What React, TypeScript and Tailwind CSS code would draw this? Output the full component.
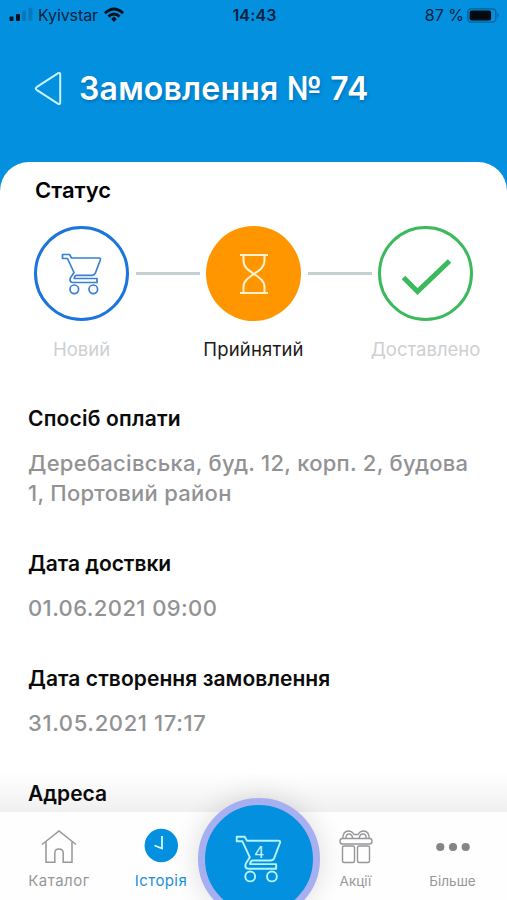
import type { ReactNode } from "react";

const details = [
  {
    title: "Спосіб оплати",
    value: "Деребасівська, буд. 12, корп. 2, будова 1, Портовий район",
    titleClass: "tracking-[0.2px]",
    valueClass: "tracking-[0.27px]",
  },
  { title: "Дата доствки", value: "01.06.2021 09:00", titleClass: "tracking-[-0.05px]", valueClass: "tracking-[0.4px]" },
  { title: "Дата створення замовлення", value: "31.05.2021 17:17", titleClass: "tracking-[0.07px]", valueClass: "tracking-[0.62px]" },
];

export default function App() {
  return (
    <div className="relative flex h-[900px] w-[507px] flex-col overflow-hidden bg-[#0290df] font-['Inter','Liberation_Sans',sans-serif]">
      <StatusBar />

      {/* Header */}
      <header className="flex h-[132px] shrink-0 items-start pl-[34px] pt-[40px]">
        <svg className="mt-px h-[35px] w-7 shrink-0" viewBox="0 0 28 35" fill="none" stroke="#c9f3ff" strokeWidth="2" strokeLinejoin="round">
          <path d="M24.2 2.2 2.6 16.2Q.8 17.5 2.6 18.8L24.2 32.8Q26.2 33.8 26.2 31.6V3.4Q26.2 1.2 24.2 2.2Z" />
        </svg>
        <h1 className="ml-[17px] mt-px whitespace-nowrap text-[32px] font-semibold leading-[36px] tracking-[0.2px] text-white [text-shadow:1px_2px_3px_rgba(0,60,120,0.35)]">
          Замовлення № 74
        </h1>
      </header>

      {/* Order */}
      <main className="flex-1 rounded-t-[29px] bg-white">
        <h2 className="pl-[35px] pt-[14px] text-[22px] font-semibold leading-[28px] text-black">Статус</h2>

        <div className="mt-[22px] flex items-start pl-[34px]">
          <Step label="Новий" className="border-[3px] border-[#1c75dc]" labelClass="text-[#cdd0d2]">
            <CartIcon className="h-[42px] w-[42px] text-[#397fd2]" />
          </Step>
          <Connector />
          <Step label="Прийнятий" className="bg-[#ff9600]" labelClass="text-[#1a1a1a] tracking-[0.15px]">
            <HourglassIcon />
          </Step>
          <Connector />
          <Step label="Доставлено" className="border-[3px] border-[#3cb95b]" labelClass="text-[#cdd0d2]">
            <svg className="h-[94px] w-[94px] shrink-0" viewBox="0 0 94 94" fill="none" stroke="#3cb95b" strokeWidth="5">
              <path d="M24.5 50.5 38.5 64.5 70.5 34" />
            </svg>
          </Step>
        </div>

        <div className="mt-[41px] flex flex-col gap-[41px] pl-7">
          {details.map((d) => (
            <section key={d.title}>
              <h3 className={`text-[21px] font-semibold leading-[30px] text-[#0b0b0b] ${d.titleClass}`}>{d.title}</h3>
              <p className={`mt-[14px] w-[450px] text-[22px] font-medium leading-[30px] text-[#929294] ${d.valueClass}`}>{d.value}</p>
            </section>
          ))}
          <h3 className="text-[21px] font-semibold leading-[30px] text-[#0b0b0b]">Адреса</h3>
        </div>
      </main>

      <TabBar />
    </div>
  );
}

function StatusBar() {
  return (
    <div className="flex h-[30px] shrink-0 items-center justify-between pl-[9px] pr-[7px] text-[#06223d]">
      <div className="flex w-[180px] items-center">
        <svg className="h-4 w-6" viewBox="0 0 24 16">
          <rect x="0.5" y="9.5" width="4" height="4.5" rx="1" fill="#04101c" />
          <rect x="7" y="7" width="4" height="7" rx="1" fill="#04101c" />
          <rect x="13" y="3.5" width="4" height="10.5" rx="1" fill="#0779ba" />
          <rect x="19.5" y="0.8" width="4" height="13.2" rx="1" fill="#0779ba" />
        </svg>
        <span className="ml-[5px] text-[16px] leading-[30px] tracking-[-0.1px]">Kyivstar</span>
        <svg className="ml-[6px] h-4 w-5" viewBox="0 0 20 16" fill="none" stroke="#04101c" strokeWidth="2.8">
          <path d="M1 6.2Q10-2.2 19 6.2" />
          <path d="M4.4 9.6Q10 4.4 15.6 9.6" />
          <path d="M7.2 12 10 9.6 12.8 12 10 15Z" fill="#04101c" stroke="none" />
        </svg>
      </div>
      <span className="text-[16px] font-semibold tracking-[0.15px]">14:43</span>
      <div className="flex w-[180px] items-center justify-end">
        <span className="text-[16px]">87 %</span>
        <svg className="ml-[3px] h-[15px] w-[33px]" viewBox="0 0 33 15">
          <rect x="0.8" y="0.8" width="28" height="13.4" rx="3.5" fill="none" stroke="#075f98" strokeWidth="1.3" />
          <rect x="2.6" y="2.6" width="21.5" height="9.8" rx="2" fill="#020a12" />
          <path d="M30.5 5Q33 7.5 30.5 10Z" fill="#075f98" />
        </svg>
      </div>
    </div>
  );
}

function Step({ label, className, labelClass, children }: { label: string; className: string; labelClass: string; children: ReactNode }) {
  return (
    <div className="flex w-[95px] shrink-0 flex-col items-center">
      <div className={`flex h-[95px] w-[95px] items-center justify-center rounded-full ${className}`}>{children}</div>
      <span className={`mt-[14px] whitespace-nowrap text-[18.5px] leading-7 ${labelClass}`}>{label}</span>
    </div>
  );
}

function Connector() {
  return <div className="mx-[6.5px] mt-[46px] h-[3px] w-16 shrink-0 bg-[#c5d0d0]" />;
}

function CartIcon({ className }: { className: string }) {
  return (
    <svg className={className} viewBox="0 0 42 42" fill="none" stroke="currentColor" strokeWidth="1.7" strokeLinejoin="round">
      <path d="M1.5 1.5H8.5L10.5 5H38Q40 5 39.3 7L34.3 20.2Q33.4 22.3 31 22.3H15.5Q13.5 22.3 13.2 25.5H36V29.5H12Q9 29.5 9 26.8Q9 25 10.7 23L13 19.5 6.5 5.5H1.5Z" />
      <circle cx="13.3" cy="36.3" r="4.3" />
      <circle cx="32.3" cy="36.3" r="4.3" />
    </svg>
  );
}

function HourglassIcon() {
  return (
    <svg className="h-[42px] w-[30px]" viewBox="0 0 30 42" fill="none" stroke="#fff3cf" strokeWidth="2">
      <path d="M1 2H29M1 40H29" />
      <path d="M4.5 2V8C4.5 14 9 17 15 21 21 25 25.5 28 25.5 34V40" />
      <path d="M25.5 2V8C25.5 14 21 17 15 21 9 25 4.5 28 4.5 34V40" />
    </svg>
  );
}

function TabBar() {
  return (
    <nav className="absolute inset-x-0 bottom-0">
      <div className="h-10 bg-linear-to-b from-transparent to-black/6" />
      <div className="flex h-[88px] items-start bg-[#fefefe] pl-2">
        <Tab label="Каталог" className="w-[102px] text-[#97979a]" labelClass="text-[15px] tracking-[0.5px]">
          <svg className="h-9 w-9" viewBox="0 0 36 36" fill="none" stroke="currentColor" strokeWidth="1.5">
            <path d="M1 16.5 18 3 35 16.5" />
            <path d="M5 14V34.2H13.8V25Q13.8 21 18 21T22.2 25V34.2H31V14" />
          </svg>
        </Tab>
        <Tab label="Історія" className="w-[102px] text-[#1a8fd6]" labelClass="text-[15px] tracking-[0.4px]">
          <svg className="h-9 w-9" viewBox="0 0 36 36" fill="none">
            <circle cx="18.3" cy="17.5" r="16.7" fill="#0290df" />
            <path d="M19 8V20.5L11.5 17.5" stroke="#d8f6ff" strokeWidth="1.8" />
          </svg>
        </Tab>
        <div className="w-[95px]" />
        <Tab label="Акції" className="w-[97px] text-[#97979a]" labelClass="text-[13.5px]">
          <svg className="h-9 w-9" viewBox="0 0 36 36" fill="none" stroke="currentColor" strokeWidth="1.4">
            <rect x="2" y="10.5" width="32" height="5.5" rx="2.5" />
            <rect x="4.5" y="18" width="12" height="16.5" rx="1.5" />
            <rect x="19.5" y="18" width="12" height="16.5" rx="1.5" />
            <path d="M4.8 10.5Q5 3 10.5 3 14 3 16 6.5H20Q22 3 25.5 3 31 3 31.2 10.5" />
            <path d="M7.8 10.5Q8 6 11 6T14.8 10.5M21.2 10.5Q21.5 6 25 6T28.2 10.5" />
          </svg>
        </Tab>
        <Tab label="Більше" className="w-[97px] text-[#97979a]" labelClass="text-[13.5px]">
          <svg className="h-9 w-9" viewBox="0 0 36 36" fill="#858587">
            <circle cx="5.3" cy="19" r="4.1" />
            <circle cx="18" cy="19" r="4.1" />
            <circle cx="30.7" cy="19" r="4.1" />
          </svg>
        </Tab>
      </div>

      {/* Cart button */}
      <div className="absolute left-[198px] top-[26px] flex h-[122px] w-[122px] items-center justify-center rounded-full border-[7px] border-[#a6aff0] bg-[#0290df] shadow-[0_0_28px_rgba(0,0,0,0.14)]">
        <CartIcon className="h-12 w-12 text-[#b5f3ff]" />
        <span className="absolute left-[49px] top-[37px] text-[16px] leading-5 text-[#c9f5ff]">4</span>
      </div>
    </nav>
  );
}

function Tab({ label, className, labelClass, children }: { label: string; className: string; labelClass: string; children: ReactNode }) {
  return (
    <div className={`flex shrink-0 flex-col items-center pt-4 ${className}`}>
      {children}
      <span className={`mt-[7px] leading-5 ${labelClass}`}>{label}</span>
    </div>
  );
}
